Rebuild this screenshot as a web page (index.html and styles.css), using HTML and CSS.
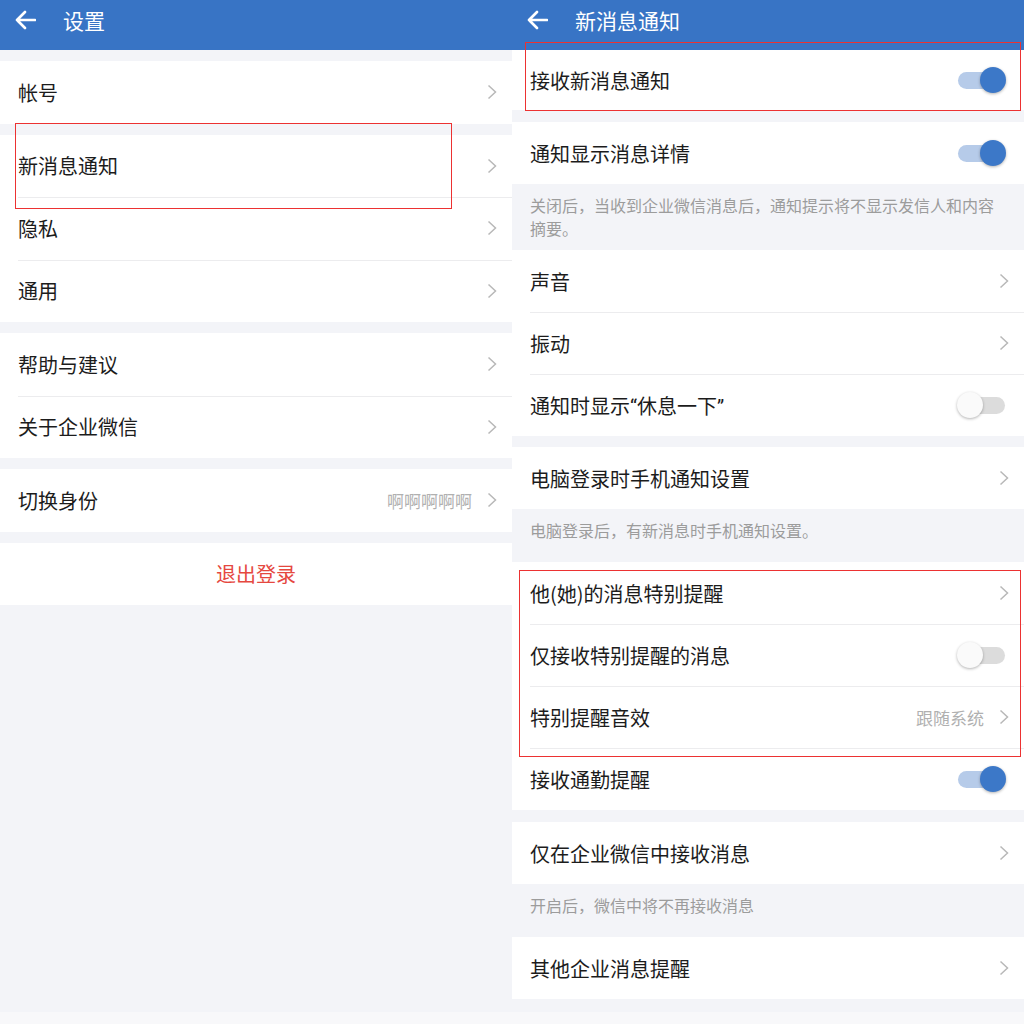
FILE: index.html
```html
<!DOCTYPE html>
<html lang="zh-CN">
<head>
<meta charset="utf-8">
<title>设置 / 新消息通知</title>
<link rel="stylesheet" href="styles.css">
</head>
<body>
<div class="screen">
  <div class="panels">
    <section class="panel panel-left">
      <header class="appbar">
        <svg class="back" width="22" height="20" viewBox="0 0 22 20"><path d="M21 10H3M11 2L3 10L11 18" fill="none" stroke="#fff" stroke-width="2.6" stroke-linecap="round" stroke-linejoin="round"/></svg>
        <h1 class="title">设置</h1>
      </header>

      <div class="group gap-l">
        <div class="row rl"><span class="label">帐号</span><svg class="chev" width="10" height="16" viewBox="0 0 10 16"><path d="M1.5 1.5L8.5 8L1.5 14.5" fill="none" stroke="#b8b8b8" stroke-width="1.5"/></svg></div>
      </div>
      <div class="group gap-l">
        <div class="row rl"><span class="label">新消息通知</span><svg class="chev" width="10" height="16" viewBox="0 0 10 16"><path d="M1.5 1.5L8.5 8L1.5 14.5" fill="none" stroke="#b8b8b8" stroke-width="1.5"/></svg></div>
        <div class="row rl"><span class="label">隐私</span><svg class="chev" width="10" height="16" viewBox="0 0 10 16"><path d="M1.5 1.5L8.5 8L1.5 14.5" fill="none" stroke="#b8b8b8" stroke-width="1.5"/></svg></div>
        <div class="row rl"><span class="label">通用</span><svg class="chev" width="10" height="16" viewBox="0 0 10 16"><path d="M1.5 1.5L8.5 8L1.5 14.5" fill="none" stroke="#b8b8b8" stroke-width="1.5"/></svg></div>
      </div>
      <div class="group gap-l">
        <div class="row rl"><span class="label">帮助与建议</span><svg class="chev" width="10" height="16" viewBox="0 0 10 16"><path d="M1.5 1.5L8.5 8L1.5 14.5" fill="none" stroke="#b8b8b8" stroke-width="1.5"/></svg></div>
        <div class="row rl"><span class="label">关于企业微信</span><svg class="chev" width="10" height="16" viewBox="0 0 10 16"><path d="M1.5 1.5L8.5 8L1.5 14.5" fill="none" stroke="#b8b8b8" stroke-width="1.5"/></svg></div>
      </div>
      <div class="group gap-l">
        <div class="row rl"><span class="label">切换身份</span><span class="value">啊啊啊啊啊</span><svg class="chev" width="10" height="16" viewBox="0 0 10 16"><path d="M1.5 1.5L8.5 8L1.5 14.5" fill="none" stroke="#b8b8b8" stroke-width="1.5"/></svg></div>
      </div>
      <div class="group gap-l">
        <div class="row rl logout">退出登录</div>
      </div>
    </section>

    <section class="panel panel-right">
      <header class="appbar">
        <svg class="back" width="22" height="20" viewBox="0 0 22 20"><path d="M21 10H3M11 2L3 10L11 18" fill="none" stroke="#fff" stroke-width="2.6" stroke-linecap="round" stroke-linejoin="round"/></svg>
        <h1 class="title">新消息通知</h1>
      </header>

      <div class="group">
        <div class="row rr first"><span class="label">接收新消息通知</span><span class="switch on"><span class="knob"></span></span></div>
      </div>
      <div class="group gap-12">
        <div class="row rr"><span class="label">通知显示消息详情</span><span class="switch on"><span class="knob"></span></span></div>
      </div>
      <p class="note">关闭后，当收到企业微信消息后，通知提示将不显示发信人和内容摘要。</p>
      <div class="group">
        <div class="row rr"><span class="label">声音</span><svg class="chev" width="10" height="16" viewBox="0 0 10 16"><path d="M1.5 1.5L8.5 8L1.5 14.5" fill="none" stroke="#b8b8b8" stroke-width="1.5"/></svg></div>
        <div class="row rr"><span class="label">振动</span><svg class="chev" width="10" height="16" viewBox="0 0 10 16"><path d="M1.5 1.5L8.5 8L1.5 14.5" fill="none" stroke="#b8b8b8" stroke-width="1.5"/></svg></div>
        <div class="row rr"><span class="label">通知时显示<span class="q">“</span>休息一下<span class="q">”</span></span><span class="switch"><span class="knob"></span></span></div>
      </div>
      <div class="group gap-11">
        <div class="row rr"><span class="label">电脑登录时手机通知设置</span><svg class="chev" width="10" height="16" viewBox="0 0 10 16"><path d="M1.5 1.5L8.5 8L1.5 14.5" fill="none" stroke="#b8b8b8" stroke-width="1.5"/></svg></div>
      </div>
      <p class="note">电脑登录后，有新消息时手机通知设置。</p>
      <div class="group gap-10">
        <div class="row rr"><span class="label">他(她)的消息特别提醒</span><svg class="chev" width="10" height="16" viewBox="0 0 10 16"><path d="M1.5 1.5L8.5 8L1.5 14.5" fill="none" stroke="#b8b8b8" stroke-width="1.5"/></svg></div>
        <div class="row rr"><span class="label">仅接收特别提醒的消息</span><span class="switch"><span class="knob"></span></span></div>
        <div class="row rr"><span class="label">特别提醒音效</span><span class="value">跟随系统</span><svg class="chev" width="10" height="16" viewBox="0 0 10 16"><path d="M1.5 1.5L8.5 8L1.5 14.5" fill="none" stroke="#b8b8b8" stroke-width="1.5"/></svg></div>
        <div class="row rr"><span class="label">接收通勤提醒</span><span class="switch on"><span class="knob"></span></span></div>
      </div>
      <div class="group gap-12">
        <div class="row rr"><span class="label">仅在企业微信中接收消息</span><svg class="chev" width="10" height="16" viewBox="0 0 10 16"><path d="M1.5 1.5L8.5 8L1.5 14.5" fill="none" stroke="#b8b8b8" stroke-width="1.5"/></svg></div>
      </div>
      <p class="note">开启后，微信中将不再接收消息</p>
      <div class="group gap-10">
        <div class="row rr"><span class="label">其他企业消息提醒</span><svg class="chev" width="10" height="16" viewBox="0 0 10 16"><path d="M1.5 1.5L8.5 8L1.5 14.5" fill="none" stroke="#b8b8b8" stroke-width="1.5"/></svg></div>
      </div>
    </section>
  </div>
  <div class="bottom-strip"></div>

  <div class="mark mark-a"></div>
  <div class="mark mark-b"></div>
  <div class="mark mark-c"></div>
</div>
</body>
</html>
```

FILE: styles.css
```css
* { box-sizing: border-box; }

html, body {
  margin: 0;
  padding: 0;
  background: #f3f4f8;
}

body {
  font-family: "Noto Sans CJK SC", "Noto Sans", sans-serif;
  color: #1c1c1c;
  -webkit-font-smoothing: antialiased;
}

.screen {
  position: relative;
  width: 1024px;
  height: 1024px;
  overflow: hidden;
  display: flex;
  flex-direction: column;
}

.panels {
  display: flex;
  height: 1012px;
}

.panel {
  width: 512px;
  background: #f3f4f8;
  display: flex;
  flex-direction: column;
}

.bottom-strip {
  flex: 1;
  background: #f8f8fa;
}

.appbar {
  height: 50px;
  background: #3874c5;
  display: flex;
  align-items: flex-start;
  padding: 9px 0 0 14px;
  flex-shrink: 0;
}

.back {
  display: block;
  margin-top: 1px;
}

.title {
  margin: 0 0 0 27px;
  font-size: 21px;
  font-weight: 400;
  line-height: 22px;
  color: #fff;
}

.group { background: #fff; }
.gap-l { margin-top: 11px; }
.gap-12 { margin-top: 12px; }
.gap-11 { margin-top: 11px; }
.gap-10 { margin-top: 10px; }

.row {
  display: flex;
  align-items: center;
  padding: 0 15px 0 18px;
  background: #fff;
  font-size: 20px;
}

.rl { height: 62.5px; }
.rr { height: 62px; }
.rr.first { height: 60px; }

.row + .row {
  background: linear-gradient(#ececee, #ececee) no-repeat 18px 0 / 100% 1px, #fff;
}

.label {
  flex: 1;
  white-space: nowrap;
}

.q {
  font-family: Roboto, "Noto Sans", sans-serif;
}

.value {
  font-size: 17px;
  color: #b0b0b0;
  margin-right: 15px;
}

.chev { display: block; }

.logout {
  justify-content: center;
  color: #e5483f;
  padding: 0;
}

.note {
  margin: 0;
  padding: 10px 18px 10px 18px;
  font-size: 16px;
  line-height: 23px;
  color: #9c9c9c;
}

.switch {
  position: relative;
  width: 47px;
  height: 26px;
  margin-right: 4px;
  flex-shrink: 0;
}

.switch::before {
  content: "";
  display: block;
  margin-top: 4.5px;
  height: 17px;
  border-radius: 9px;
  background: #dcdcdc;
}

.switch.on::before { background: #b6cbe9; }

.knob {
  position: absolute;
  top: 0;
  left: -1px;
  width: 26px;
  height: 26px;
  border-radius: 50%;
  background: #fafafa;
  box-shadow: 0 1px 3px rgba(0, 0, 0, 0.3);
}

.switch.on .knob {
  left: auto;
  right: -1px;
  background: #3c78c8;
}

.mark {
  position: absolute;
  border: 1.5px solid #ec3232;
}

.mark-a { left: 15px; top: 123px; width: 437px; height: 86px; }
.mark-b { left: 525px; top: 42px; width: 496px; height: 69px; }
.mark-c { left: 519px; top: 570px; width: 502px; height: 187px; }
```
